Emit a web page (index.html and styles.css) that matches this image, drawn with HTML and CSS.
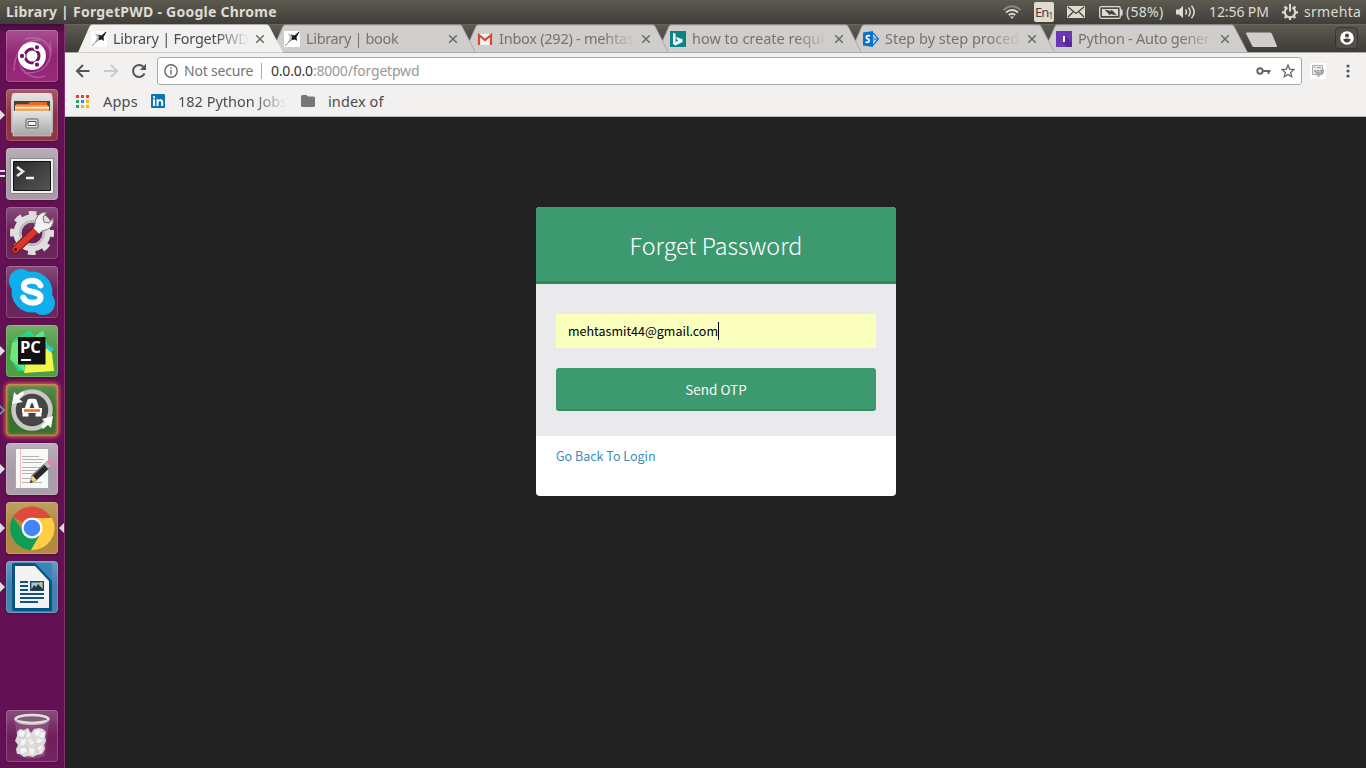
FILE: index.html
```html
<!DOCTYPE html>
<html lang="en">
<head>
<meta charset="utf-8">
<title>Library | ForgetPWD</title>
<link rel="stylesheet" href="styles.css">
</head>
<body>
<svg class="defs" width="0" height="0">
  <defs>
    <symbol id="tabshape" viewBox="0 0 206 29"><path d="M.5 28.5 12 2.5Q12.7 1 14 1H189Q190.3 1 191 2.5L204.5 28.5" /></symbol>
    <symbol id="close" viewBox="0 0 10 10"><path d="M1.200 1.200 8.800 8.800M8.800 1.200 1.200 8.800" fill="none" stroke="#6b6a69" stroke-width="1.500"/></symbol>
    <symbol id="bird" viewBox="0 0 16 16"><path fill="#fff" d="M0 0h16v16H0z"/><path fill="#bbb" d="M4 2.500 8 4l1 4-2 2-3 1 2-4z"/><path fill="#1b1b1b" d="M7 3.500 10.500 4.500 15 .5l.5.5L12.500 6l.5 4-2-1.500-3 .5L7.500 7l1-1z"/><path stroke="#888" d="M1 15 4 11.500l4-3" fill="none"/></symbol>
    <linearGradient id="gray" x2="0" y2="1"><stop stop-color="#e4e4e4"/><stop offset="1" stop-color="#a5a5a5"/></linearGradient>
    <linearGradient id="dark" x2="1" y2="1"><stop stop-color="#2b2b2b"/><stop offset="1" stop-color="#555"/></linearGradient>
  </defs>
</svg>
<div class="desktop">
  <header class="panel">
    <span class="panel-title">Library | ForgetPWD - Google Chrome</span>
    <div class="indicators">
      <svg class="wifi" width="20" height="14" viewBox="0 0 20 14" fill="none" stroke="#dfdbd2" stroke-width="1.8"><path stroke="#8b897f" d="M1.5 5Q10-2.5 18.500 5"/><path d="M4 7.500Q10 2.500 16 7.500"/><path d="M6.700 10Q10 7.400 13.300 10"/><path fill="#dfdbd2" stroke="none" d="M8 11.500h4L10 14z"/></svg>
      <span class="lang">En<sub>1</sub></span>
      <svg class="mail" width="18" height="12" viewBox="0 0 18 12"><rect width="18" height="12" rx="1" fill="#dfdbd2"/><path d="M1 1 9 7.500 17 1M1 11 6 6M17 11l-5-5" fill="none" stroke="#46443d" stroke-width="1.300"/></svg>
      <svg class="battery" width="24" height="13" viewBox="0 0 24 13"><rect x=".7" y=".7" width="20.600" height="11.600" rx="1.500" fill="none" stroke="#dfdbd2" stroke-width="1.300"/><path fill="#dfdbd2" d="M22 3.500h1.600v6H22zM3 3h16v7H3z"/><path fill="#46443d" d="M5.500 3.500 12 5l.5-1.500 5.500 6-6.500-1.500-.5 1.500z"/></svg>
      <span class="pct">(58%)</span>
      <svg class="sound" width="20" height="14" viewBox="0 0 20 14" fill="none" stroke="#dfdbd2" stroke-width="1.500"><path fill="#dfdbd2" stroke="none" d="M0 4.500h3L7 1v12L3 9.500H0z"/><path d="M9.500 4.500Q11.500 7 9.500 9.500M12.500 2.500Q16 7 12.500 11.500M15.500.7Q20.800 7 15.500 13.300"/></svg>
      <span class="clock">12:56 PM</span>
      <svg class="gear" width="16" height="16" viewBox="0 0 16 16" fill="none" stroke="#dfdbd2"><path stroke-width="2" d="M5.500 3.500A5.200 5.200 0 1 0 10.500 3.500"/><path stroke-width="2" d="M8 0v7.500"/><path stroke-width="2.300" d="M0 8.300h3M13 8.300h3M2.500 2.500l2 2M13.500 2.500l-2 2M2.700 14l2-2M13.300 14l-2-2M8 13v3"/></svg>
      <span class="user">srmehta</span>
    </div>
  </header>
  <div class="workspace">
    <nav class="launcher">
      <div class="tile dash"><svg viewBox="0 0 52 52"><g fill="none" stroke="#d28bc2" opacity=".5"><path d="M8 41C8 25 16 9 34 10M19 9C38 5 48 16 43 31M44 12C48 32 38 44 18 43M12 22C10 42 28 51 39 46" stroke-width="1.500"/></g><circle cx="26" cy="27" r="15" fill="#6f145d" opacity=".5"/><circle cx="26" cy="26" r="14" fill="#fff"/><circle cx="26" cy="26" r="7" fill="none" stroke="#781464" stroke-width="3"/><g stroke="#fff" stroke-width="1.500" fill="#781464"><circle cx="16" cy="26" r="2.900"/><circle cx="31" cy="17.300" r="2.900"/><circle cx="31" cy="34.700" r="2.900"/></g></svg></div>
      <div class="tile files"><i class="arrow"></i><svg viewBox="0 0 52 52"><path fill="url(#gray)" d="M6 6Q6 4 9 4H43Q46 4 46 6L47 12V43Q47 44 45 44H7Q5 44 5 43V12z"/><path fill="#49413d" d="M8 12h36v11H8z"/><path fill="#e9662b" d="M10 15h12l2-2h17v5H10z"/><path fill="#fff4d6" d="M9 17.500h34v5H9z"/><path fill="#f2a044" d="M9 16h33v1.500H9zM9 19.500h34V22H9z"/><path fill="url(#gray)" stroke="#d8d8d8" stroke-width=".6" d="M7 22h38v25H7z"/><rect x="20" y="30" width="12" height="9" rx="1.500" fill="#ddd" stroke="#888" stroke-width="1.500"/><path fill="#f5f5f5" stroke="#555" d="M22 32.500h8v4h-8z"/></svg></div>
      <div class="tile terminal"><i class="arrow twin"></i><svg viewBox="0 0 52 52"><path fill="#efefef" stroke="#888" d="M4.500 10.500h43v35h-43z"/><path fill="url(#dark)" stroke="#111" d="M7.500 13.500h37v29h-37z"/><path fill="none" stroke="#eee" stroke-width="2.600" d="M11 19l6 4.500-6 4.500M20 30h8"/></svg></div>
      <div class="tile settings"><svg viewBox="0 0 52 52"><g fill="none" stroke="#dedede"><circle cx="26" cy="26" r="14.500" stroke-width="8"/><circle cx="26" cy="26" r="19" stroke-width="6" stroke-dasharray="7.460 7.460" stroke-dashoffset="3.700"/></g><circle cx="26" cy="26" r="12" fill="none" stroke="#bababa" stroke-width="2"/><path stroke="#771410" stroke-width="8.500" stroke-linecap="round" d="M9.500 42.500 30 23"/><path stroke="#d9352d" stroke-width="6.500" stroke-linecap="round" d="M9.500 42.500 30 23"/><path fill="#f2f2f2" stroke="#777" d="M28.500 19.500Q29 5 41 5l-4 5 1 5 5 1 4-5Q49 22 36 24l-3 3-6-6z"/><circle cx="9.500" cy="42.500" r="1.700" fill="#5d1711"/></svg></div>
      <div class="tile skype"><svg viewBox="0 0 52 52"><g fill="#10aeea"><circle cx="26" cy="26" r="20.500"/><circle cx="15" cy="15" r="12"/><circle cx="37" cy="37" r="12"/></g><path d="M34.500 19.500C32 12.500 17.500 13.500 17.800 20.500C18.500 27.500 34.500 24 34.500 31.500C34.500 38.500 20 38.500 17.300 31.500" fill="none" stroke="#fff" stroke-width="6" stroke-linecap="round"/></svg></div>
      <div class="tile pycharm"><i class="arrow"></i><svg viewBox="0 0 52 52"><path fill="#27d589" d="M4 34 7 15 24 5 30 14 20 46 12 46z"/><path fill="#5fe08b" d="M28 12 37 5 41 19 30 22z"/><path fill="#6ee67c" d="M6 18 20 12 18 46 4 34z"/><path fill="#21c8ee" d="M38 17l10 7-8 10z"/><path fill="#eef74a" d="M40 23l6 5 2 18-30 2 2-10 16-1z"/><path fill="#111" d="M12 12h27.500v27.500H12z"/><path fill="#fff" d="M15 34h10v2H15z"/><text class="pc" x="14" y="27.500">PC</text></svg></div>
      <div class="tile updater"><i class="arrow hollow"></i><svg viewBox="0 0 52 52"><circle cx="26" cy="26" r="17" fill="#464644"/><circle cx="26" cy="26" r="18.500" fill="none" stroke="#c9cac7" stroke-width="4.500"/><path fill="#fafafa" d="M6 20 8 8l3 3 6-4 1 3-5 5 4 3zM47 32l-2 12-3-3-5 4-2-3 4-4-3-3z"/><path fill="none" stroke="#fff" stroke-width="4.500" stroke-linejoin="round" d="M19 31 23.500 17h5L33 31"/><path fill="none" stroke="#fff" stroke-width="3" d="M16.500 31h6M29.500 31h6"/><path stroke="#fff" stroke-width="5" d="M16 26.500h20"/><path stroke="#f06a1d" stroke-width="2.500" d="M18 26.500h16"/></svg></div>
      <div class="tile editor"><i class="arrow"></i><svg viewBox="0 0 52 52"><path fill="#f8f8f5" stroke="#aaa" d="M9.500 5.500h33v40h-33z"/><path stroke="#f3bcbc" d="M14.500 6v39"/><path stroke="#b4b4b4" d="M16 13.500h17M16 16.500h22M16 19.500h20M16 24.500h19M16 27.500h18M16 30.500h13M16 35.500h10M16 39.500h20"/><path fill="#f0d685" stroke="#9b8443" stroke-width=".7" d="M24 40 26 32 31 37z"/><path stroke="#292929" stroke-width="6.500" d="M28.500 34.500 42 22"/><path stroke="#777" stroke-width="1.500" d="M27 32 40 20"/><path stroke="#bdbdbd" stroke-width="6.500" d="M40 23.500l3-2.800"/><path stroke="#de88b7" stroke-width="6.500" d="M42.500 21.200l4-3.700"/><path fill="#222" d="M24 40l1-3 2 2z"/></svg></div>
      <div class="tile chrome"><i class="arrow"></i><i class="arrow focused"></i><svg viewBox="0 0 52 52"><path fill="#dd4b3e" d="M26 26 7 15A22 22 0 0 1 45 16H26z"/><path fill="#109d58" d="M7 15A22 22 0 0 0 25 48l10-17-9-5-8 4z"/><path fill="#ffce44" d="M26 16H46A22 22 0 0 1 25 48L35 31z"/><circle cx="26" cy="26" r="10.500" fill="#fff"/><circle cx="26" cy="26" r="8.300" fill="#4285f4"/></svg></div>
      <div class="tile writer"><i class="arrow"></i><svg viewBox="0 0 52 52"><path fill="#075185" d="M8 2h25l13 14v34H8Q6 50 6 47V5Q6 2 8 2z"/><path fill="#f3f3f3" d="M9 5h20l14 15v27H9z"/><path fill="#3a83b7" d="M29 2h14q3 0 3 3v15z"/><path stroke="#14517d" stroke-width="2" d="M14 21h8M14 25h8M14 29h8M14 33h24M14 37h24M14 41h18"/><path fill="#9dc9e6" stroke="#174967" stroke-width="1.400" d="M24.700 20.700h12.600v8.600H24.700z"/><path fill="#333" d="M25 29l3-5 2 2 2-3 5 5v1z"/><circle cx="35" cy="22.500" r="1.500" fill="#f4c62b"/></svg></div>
      <div class="tile trash"><svg viewBox="0 0 52 52"><path fill="#a76c9c" opacity=".45" d="M9 11h34l-4 35Q26 51 13 46z"/><path fill="#dcdcdc" d="M11 22l3-3 4 1 4-2 3 5 3-4 5-1 4 1 3 3-1 5 1 4-2 4 1 4-3 5-5 1-4 2-5-1-4 1-4-3-3 0-1-5 2-4-3-4 2-5z"/><path fill="#f5f5f5" d="M13 21l6 1-2 5-4-1zM21 20l3 4-2 5-2-3zM30 20l5 1-3 5-4-2zM36 22l3 2-3 4-3-2zM15 30l5-1-1 5-4 2zM24 29l5 2-4 4-3-2zM32 28l6 3-5 3-3-2zM14 39l5-2 2 4-5 3zM23 38l6 1-2 6-4-2zM32 37l4-1 0 6-3 1z"/><path fill="none" stroke="#bebebe" stroke-width=".6" d="M13 27l5 1 4-6M20 35l7-5 5 4 5-3M15 37l6 0 3 6M29 37l3 6 4-5"/><ellipse cx="26" cy="9" rx="16.500" ry="4" fill="#806077" stroke="#e2e2e2" stroke-width="2.500"/><path d="M9.500 10Q12 14.500 26 14.500T42.500 10" fill="none" stroke="#bdbdbd" stroke-width="1.500"/></svg></div>
    </nav>
    <main class="browser">
      <div class="tabs">
        <div class="tab active"><svg class="shape"><use href="#tabshape"/></svg><svg class="fav"><use href="#bird"/></svg><span class="label">Library | ForgetPWD</span><svg class="x"><use href="#close"/></svg></div>
        <div class="tab"><svg class="shape"><use href="#tabshape"/></svg><svg class="fav"><use href="#bird"/></svg><span class="label narrow">Library | book</span><svg class="x"><use href="#close"/></svg></div>
        <div class="tab"><svg class="shape"><use href="#tabshape"/></svg><svg class="fav" viewBox="0 0 16 16"><path fill="#f3f3f3" d="M1 3h14v11H1z"/><path fill="none" stroke="#d94738" stroke-width="2.200" d="M2 14V4l6 5 6-5v10"/></svg><span class="label">Inbox (292) - mehtas</span><svg class="x"><use href="#close"/></svg></div>
        <div class="tab"><svg class="shape"><use href="#tabshape"/></svg><svg class="fav" viewBox="0 0 16 16"><path fill="#0c8484" d="M0 0h16v16H0z"/><path fill="#fff" d="M3 2l2.500.8v7.800l-2 1.500 5-2.700-1.600-.8-.9-2.500 6.500 2.200v2.600L5.500 14.500 3 13z"/></svg><span class="label wide">how to create requi</span><svg class="x"><use href="#close"/></svg></div>
        <div class="tab"><svg class="shape"><use href="#tabshape"/></svg><svg class="fav" viewBox="0 0 16 16"><path fill="#fff" stroke="#0872c9" stroke-width="1.400" d="M9 2.500h1.500L15.200 8 10.500 13.500H9"/><path fill="none" stroke="#0872c9" d="M9.500 5l3 3-3 3M9 8h5"/><path fill="#0872c9" d="M0 1.500 10 0v16L0 14.500z"/><path fill="none" stroke="#fff" stroke-width="1.700" d="M7 5C3.500 3.500 2 7 4.700 7.800S6.500 12.300 2.500 11"/></svg><span class="label wide">Step by step proced</span><svg class="x"><use href="#close"/></svg></div>
        <div class="tab"><svg class="shape"><use href="#tabshape"/></svg><svg class="fav" viewBox="0 0 16 16"><path fill="#6b38b4" d="M0 0h16v16H0z"/><path fill="#53299a" d="M9 5l7 7v4H11L7 11z"/><path fill="#fff" d="M7 5h2v6H7z"/></svg><span class="label">Python - Auto gener</span><svg class="x"><use href="#close"/></svg></div>
        <svg class="newtab" width="34" height="16" viewBox="0 0 34 16"><path fill="#d0cecc" d="M1 1.500Q1 .5 2 .5H25Q26.500.5 27 2l5 12q.4 1-.7 1H9Q7.500 15 7 13.500z"/></svg>
        <div class="profile"><svg width="14" height="14" viewBox="0 0 14 14"><circle cx="7" cy="7" r="6.800" fill="#fff"/><circle cx="7" cy="4.500" r="2" fill="#45433d"/><path fill="#45433d" d="M3 8.500Q7 6.700 11 8.500 9.500 11.500 7 11.500T3 8.500z"/></svg></div>
      </div>
      <div class="toolbar">
        <svg class="back" width="16" height="16" viewBox="0 0 16 16" fill="none" stroke="#555" stroke-width="2"><path d="M14.500 8H2M8 2 2 8l6 6"/></svg>
        <svg class="forward" width="16" height="16" viewBox="0 0 16 16" fill="none" stroke="#ccc" stroke-width="2"><path d="M1 8h13M8 2l6 6-6 6"/></svg>
        <svg class="reload" width="16" height="16" viewBox="0 0 16 16"><path d="M13.500 10.500A6 6 0 1 1 12.500 4" fill="none" stroke="#555" stroke-width="2"/><path fill="#555" d="M15 .8V7H8.800z"/></svg>
        <div class="omnibox">
          <svg width="14" height="14" viewBox="0 0 14 14" fill="none" stroke="#666" stroke-width="1.400"><circle cx="7" cy="7" r="6.200"/><path d="M7 6v4.500M7 3.300v1.500"/></svg>
          <span class="secure">Not secure</span><i class="rule"></i><span class="url"><b>0.0.0.0</b>:8000/forgetpwd</span>
          <svg class="key" width="15" height="8" viewBox="0 0 15 8"><circle cx="4" cy="4" r="2.700" fill="none" stroke="#666" stroke-width="2"/><path fill="#666" d="M7 3h7.500v2h-1v2h-2V5H7z"/></svg>
          <svg class="star" width="14" height="14" viewBox="0 0 14 14"><path fill="none" stroke="#666" stroke-width="1.300" d="M7 1.200 8.600 5.100l4.400.4-3.300 2.900 1 4.300L7 10.400l-3.700 2.300 1-4.300L1 5.500l4.400-.4z"/></svg>
        </div>
        <svg class="ext" width="16" height="16" viewBox="0 0 16 16"><path fill="#fff" d="M0 0h16v16H0z"/><path fill="#eee" stroke="#aaa" d="M2.500 2.500h10v9h-10z"/><path stroke="#999" d="M4 4.500h1.500M7 4.500h4M4 7.500h1.500M7 7.500h2"/><path fill="#aaa" d="M4 8l2-1 2 2 5-4 1 2v3l-6 4z"/></svg>
        <svg class="menu" width="4" height="14" viewBox="0 0 4 14" fill="#555"><circle cx="2" cy="2" r="1.600"/><circle cx="2" cy="7" r="1.600"/><circle cx="2" cy="12" r="1.600"/></svg>
      </div>
      <div class="bookmarks">
        <svg class="apps" width="13" height="13" viewBox="0 0 13 13"><path fill="#f03e35" d="M0 0h3v3H0zM5 0h3v3H5zM10 0h3v3h-3z"/><path fill="#22a565" d="M0 5h3v3H0zM0 10h3v3H0z"/><path fill="#3c82f0" d="M5 5h3v3H5z"/><path fill="#f5b70a" d="M10 5h3v3h-3zM5 10h3v3H5zM10 10h3v3h-3z"/></svg>
        <span class="bm-apps">Apps</span>
        <svg class="linkedin" width="14" height="14" viewBox="0 0 14 14"><rect width="14" height="14" rx="1" fill="#0976b4"/><path fill="#fff" d="M2 5.300h2V12H2zM2 2.300h2v2H2zM5.500 5.300h2v1Q9 4.600 11 5.500q1.200.6 1.200 2.700V12h-2V8.500Q10 6.800 8.700 7q-1.200.2-1.200 1.800V12h-2z"/></svg>
        <span class="bm-jobs">182 Python Jobs</span>
        <svg class="folder" width="14" height="12" viewBox="0 0 14 12"><path fill="#777" d="M1.500 0H5.500L7 1.500H12.500Q14 1.500 14 3v7.500Q14 12 12.500 12h-11Q0 12 0 10.500v-9Q0 0 1.500 0z"/></svg>
        <span class="bm-index">index of</span>
      </div>
      <section class="page">
        <form class="card">
          <h1>Forget Password</h1>
          <div class="fields">
            <div class="email">mehtasmit44@gmail.com<i class="caret"></i></div>
            <button type="button">Send OTP</button>
          </div>
          <footer><a href="#">Go Back To Login</a></footer>
        </form>
      </section>
    </main>
  </div>
</div>
</body>
</html>
```
FILE: styles.css
```css
* { box-sizing: border-box; }
body { margin: 0; width: 1366px; height: 768px; overflow: hidden; font: 14.5px/20px "Noto Sans", sans-serif; }
svg { display: block; flex: none; }
span { white-space: nowrap; }
.defs { position: absolute; }
.desktop { display: flex; flex-direction: column; height: 768px; }

.panel { display: flex; align-items: center; justify-content: space-between; height: 24px; padding: 0 5px 0 6px; background: linear-gradient(#5d5a50, #3f3e39); color: #dfdbd2; }
.panel-title { font-weight: 700; font-size: 14px; letter-spacing: .25px; }
.indicators { display: flex; align-items: center; height: 24px; font-size: 14px; }
.wifi { margin-right: 1px; }
.lang { width: 20px; height: 20px; margin: 0 13px 0 11px; padding-left: 1px; border-radius: 2px; background: #dfdbd2; color: #45433d; font-size: 13px; letter-spacing: -.9px; }
.lang sub { font-size: 8px; line-height: 0; vertical-align: -2px; }
.battery { margin-left: 14px; }
.pct { width: 38px; margin-left: 3px; letter-spacing: .3px; }
.sound { margin-left: 12px; }
.clock { width: 61px; margin-left: 13px; letter-spacing: -.1px; }
.gear { margin-left: 12px; }
.user { width: 57px; margin-left: 6px; letter-spacing: .3px; }

.workspace { display: flex; flex: 1; min-height: 0; }
.launcher { display: flex; flex-direction: column; gap: 7px; width: 65px; padding: 6px 7px 6px 6px; background: linear-gradient(#450b3c, #641054 9px); border-right: 1px solid #813572; }
.tile { position: relative; flex: none; width: 52px; height: 52px; border-radius: 4px; box-shadow: inset 0 0 0 1px #ffffff30, 0 1px 2px #3004; background-image: linear-gradient(#ffffff38, #ffffff04 50%, #ffffff0c); }
.tile svg { width: 52px; height: 52px; }
.dash { background-color: #912073; }
.files { background-color: #8c2d3c; }
.terminal { background-color: #a497a5; }
.settings, .skype { background-color: #661c55; }
.pycharm { background-color: #48993c; }
.updater { background-color: #316c28; box-shadow: inset 0 0 3px 1px #ff8d4d, 0 0 4px 1px #ec6548; }
.editor { background-color: #a899a8; }
.chrome { background-color: #ad8639; }
.writer { background-color: #3d7ead; }
.trash { margin-top: auto; background-color: #6c1b59; }
.pc { font: 700 16.5px "Open Sans", sans-serif; fill: #fff; }
.arrow { position: absolute; left: -6px; top: 21px; border: 5px solid transparent; border-left-color: #ddd; border-right: 0; }
.twin { top: 22px; width: 5px; height: 7px; border: solid #ddd; border-width: 2px 0; }
.hollow { border-left-color: #72a6d0; }
.hollow::after { content: ""; position: absolute; left: -5px; top: -3px; border: 3px solid transparent; border-left-color: #641054; border-right: 0; }
.focused { left: auto; right: -6px; border: 5px solid transparent; border-right-color: #ddd; border-left: 0; }

.browser { display: flex; flex-direction: column; flex: 1; background: #f2f1f0; color: #4c4c4c; }
.tabs { display: flex; height: 29px; padding-left: 13px; background: linear-gradient(#5d5a50, #3d3c38 95%); border-top: 1px solid #67645a; box-shadow: inset 0 -1px #aaa8a5; isolation: isolate; }
.tab { position: relative; z-index: 1; display: flex; align-items: center; width: 206px; height: 28px; margin-right: -13px; padding-left: 13px; color: #757371; }
.tab:nth-child(1) { z-index: 6; color: #4c4c4c; }
.tab:nth-child(2) { z-index: 5; }
.tab:nth-child(3) { z-index: 4; }
.tab:nth-child(4) { z-index: 3; }
.tab:nth-child(5) { z-index: 2; }
.tab:not(.active)::before { content: ""; position: absolute; left: 1px; right: 1px; bottom: 0; height: 1px; background: #aaa8a5; }
.shape { position: absolute; left: 0; top: -1px; z-index: -1; width: 206px; height: 29px; fill: #d0cecc; stroke: #aaa8a5; stroke-width: 1px; }
.active .shape { fill: #f2f1f0; stroke: #f2f1f0; }
.fav { width: 16px; height: 16px; }
.label { width: 136px; margin-left: 6px; padding-bottom: 2px; overflow: hidden; letter-spacing: -.25px; -webkit-mask-image: linear-gradient(90deg, #000 104px, transparent 136px); mask-image: linear-gradient(90deg, #000 104px, transparent 136px); }
.narrow { letter-spacing: -.35px; }
.wide { letter-spacing: 0; }
.x { width: 10px; height: 10px; margin-left: 6px; }
.newtab { margin: 7px 0 0 9px; }
.profile { display: flex; align-items: center; justify-content: center; width: 23px; height: 22px; margin: 2px 8px 0 auto; border: 1px solid #37352f; border-radius: 4px; background: #514f47; }

.toolbar { display: flex; align-items: center; height: 33px; padding: 3px 16px 0 10px; }
.forward { margin-left: 12px; }
.reload { margin-left: 12px; }
.omnibox { display: flex; align-items: center; width: 1145px; height: 28px; margin: 0 8px 0 10px; padding: 0 6px; border: 1px solid #aaa; border-radius: 3px; background: #fff; font-size: 14px; }
.secure { width: 70px; margin-left: 6px; color: #757575; letter-spacing: -.2px; }
.rule { width: 1px; height: 16px; margin: 0 9px 0 7px; background: #aaa; }
.url { color: #999; letter-spacing: -.2px; }
.url b { color: #333; font-weight: 400; }
.key { margin-left: auto; }
.star { margin-left: 10px; }
.menu { margin-left: 20px; }

.bookmarks { display: flex; align-items: center; height: 31px; padding-left: 11px; border-bottom: 1px solid #bcbbb9; }
.bm-apps { width: 35px; margin-left: 14px; letter-spacing: .2px; }
.linkedin { margin-left: 13px; }
.bm-jobs { width: 109px; margin-left: 13px; overflow: hidden; -webkit-mask-image: linear-gradient(90deg, #000 75px, transparent); mask-image: linear-gradient(90deg, #000 75px, transparent); }
.folder { margin-left: 14px; }
.bm-index { margin-left: 13px; letter-spacing: .1px; }

.page { flex: 1; padding-top: 90px; background: #222; font-family: "Noto Sans CJK SC", sans-serif; }
.card { width: 360px; height: 289px; margin-left: 471px; border-radius: 4px; overflow: hidden; background: #fff; }
h1 { height: 77px; margin: 0; border-bottom: 3px solid #368259; background: #3d9970; color: #fff; font-size: 23.3px; font-weight: 300; line-height: 77px; text-align: center; }
.fields { height: 152px; padding: 30px 20px; background: #eaeaec; }
.email { display: flex; align-items: center; height: 34px; padding-left: 12px; background: #faffbd; color: #000; font-size: 12.5px; }
.caret { width: 1px; height: 18px; background: #000; }
button { display: block; width: 320px; height: 43px; margin-top: 20px; padding: 2px 0 0; border: 0; border-radius: 3px; border-bottom: 2px solid #368c62; background: #3d9970; color: #f9f9f9; font: 13.5px/39px "Noto Sans CJK SC", sans-serif; }
footer { padding: 9px 20px; }
a { color: #3c8dbc; font-size: 12.5px; text-decoration: none; }
```
